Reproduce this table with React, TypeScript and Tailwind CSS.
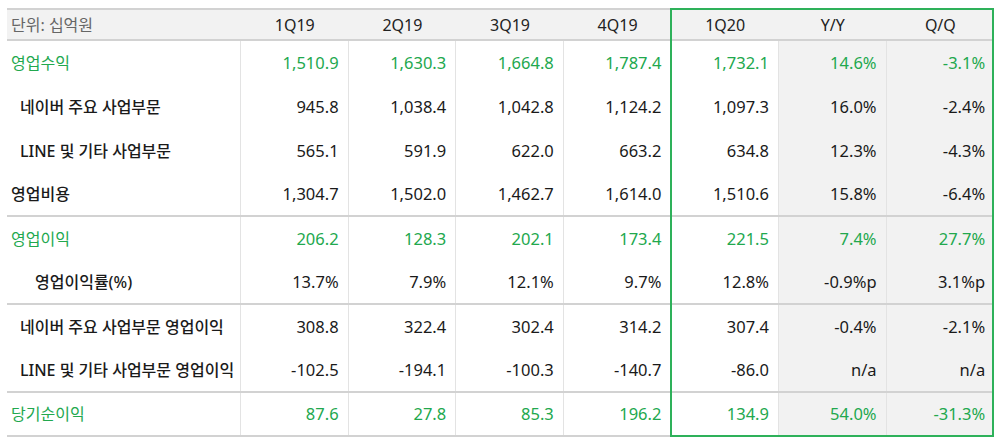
import React from "react";

type Row = {
  label: string;
  indent: "none" | "sm" | "lg";
  green?: boolean;
  border?: boolean;
  values: string[];
};

const rows: Row[] = [
  { label: "영업수익", indent: "none", green: true, values: ["1,510.9", "1,630.3", "1,664.8", "1,787.4", "1,732.1", "14.6%", "-3.1%"] },
  { label: "네이버 주요 사업부문", indent: "sm", values: ["945.8", "1,038.4", "1,042.8", "1,124.2", "1,097.3", "16.0%", "-2.4%"] },
  { label: "LINE 및 기타 사업부문", indent: "sm", values: ["565.1", "591.9", "622.0", "663.2", "634.8", "12.3%", "-4.3%"] },
  { label: "영업비용", indent: "none", border: true, values: ["1,304.7", "1,502.0", "1,462.7", "1,614.0", "1,510.6", "15.8%", "-6.4%"] },
  { label: "영업이익", indent: "none", green: true, values: ["206.2", "128.3", "202.1", "173.4", "221.5", "7.4%", "27.7%"] },
  { label: "영업이익률(%)", indent: "lg", border: true, values: ["13.7%", "7.9%", "12.1%", "9.7%", "12.8%", "-0.9%p", "3.1%p"] },
  { label: "네이버 주요 사업부문 영업이익", indent: "sm", values: ["308.8", "322.4", "302.4", "314.2", "307.4", "-0.4%", "-2.1%"] },
  { label: "LINE 및 기타 사업부문 영업이익", indent: "sm", border: true, values: ["-102.5", "-194.1", "-100.3", "-140.7", "-86.0", "n/a", "n/a"] },
  { label: "당기순이익", indent: "none", green: true, border: true, values: ["87.6", "27.8", "85.3", "196.2", "134.9", "54.0%", "-31.3%"] },
];

const headers = ["1Q19", "2Q19", "3Q19", "4Q19", "1Q20", "Y/Y", "Q/Q"];

export default function App() {
  return (
    <div
      className="w-[1000px] h-[445px] bg-white overflow-hidden pt-[8px] pl-[7px]"
      style={{ fontFamily: '"Noto Sans", "Noto Sans CJK KR", sans-serif' }}
    >
      <div className="relative w-[987px]">
        <div className="grid grid-cols-[234px_repeat(7,107.6px)] h-[33px] bg-[#f2f2f2] border-t-2 border-b-2 border-[#d2d2d2] text-[16px] text-[#222]">
          <div className="flex items-center pl-[4px] text-[#666]">단위: 십억원</div>
          {headers.map((h) => (
            <div key={h} className="flex items-center justify-center">
              {h}
            </div>
          ))}
        </div>
        {rows.map((r, i) => (
          <div
            key={i}
            className={
              "grid grid-cols-[234px_repeat(7,107.6px)] text-[16.5px] h-[44px] " +
              (r.border ? "border-b-2 border-[#d2d2d2]" : "") +
              (r.green ? " text-[#22a84e]" : " text-[#1a1a1a]")
            }
          >
            <div
              className={
                "flex items-center border-r border-[#e3e3e3] text-[16px] " +
                (r.indent === "none" ? "pl-[4px]" : r.indent === "sm" ? "pl-[13px]" : "pl-[28px]") +
                (r.green ? "" : " font-medium")
              }
            >
              {r.label}
            </div>
            {r.values.map((v, j) => (
              <div
                key={j}
                className={
                  "flex items-center justify-end pr-[9px] " +
                  (j < 6 ? "border-r border-[#e3e3e3] " : "") +
                  (j >= 5 ? "bg-[#f2f2f2]" : "")
                }
              >
                {v}
              </div>
            ))}
          </div>
        ))}
        <div className="absolute left-[663px] top-0 w-[324px] bottom-0 border-2 border-[#2eb15a] pointer-events-none" />
      </div>
    </div>
  );
}
